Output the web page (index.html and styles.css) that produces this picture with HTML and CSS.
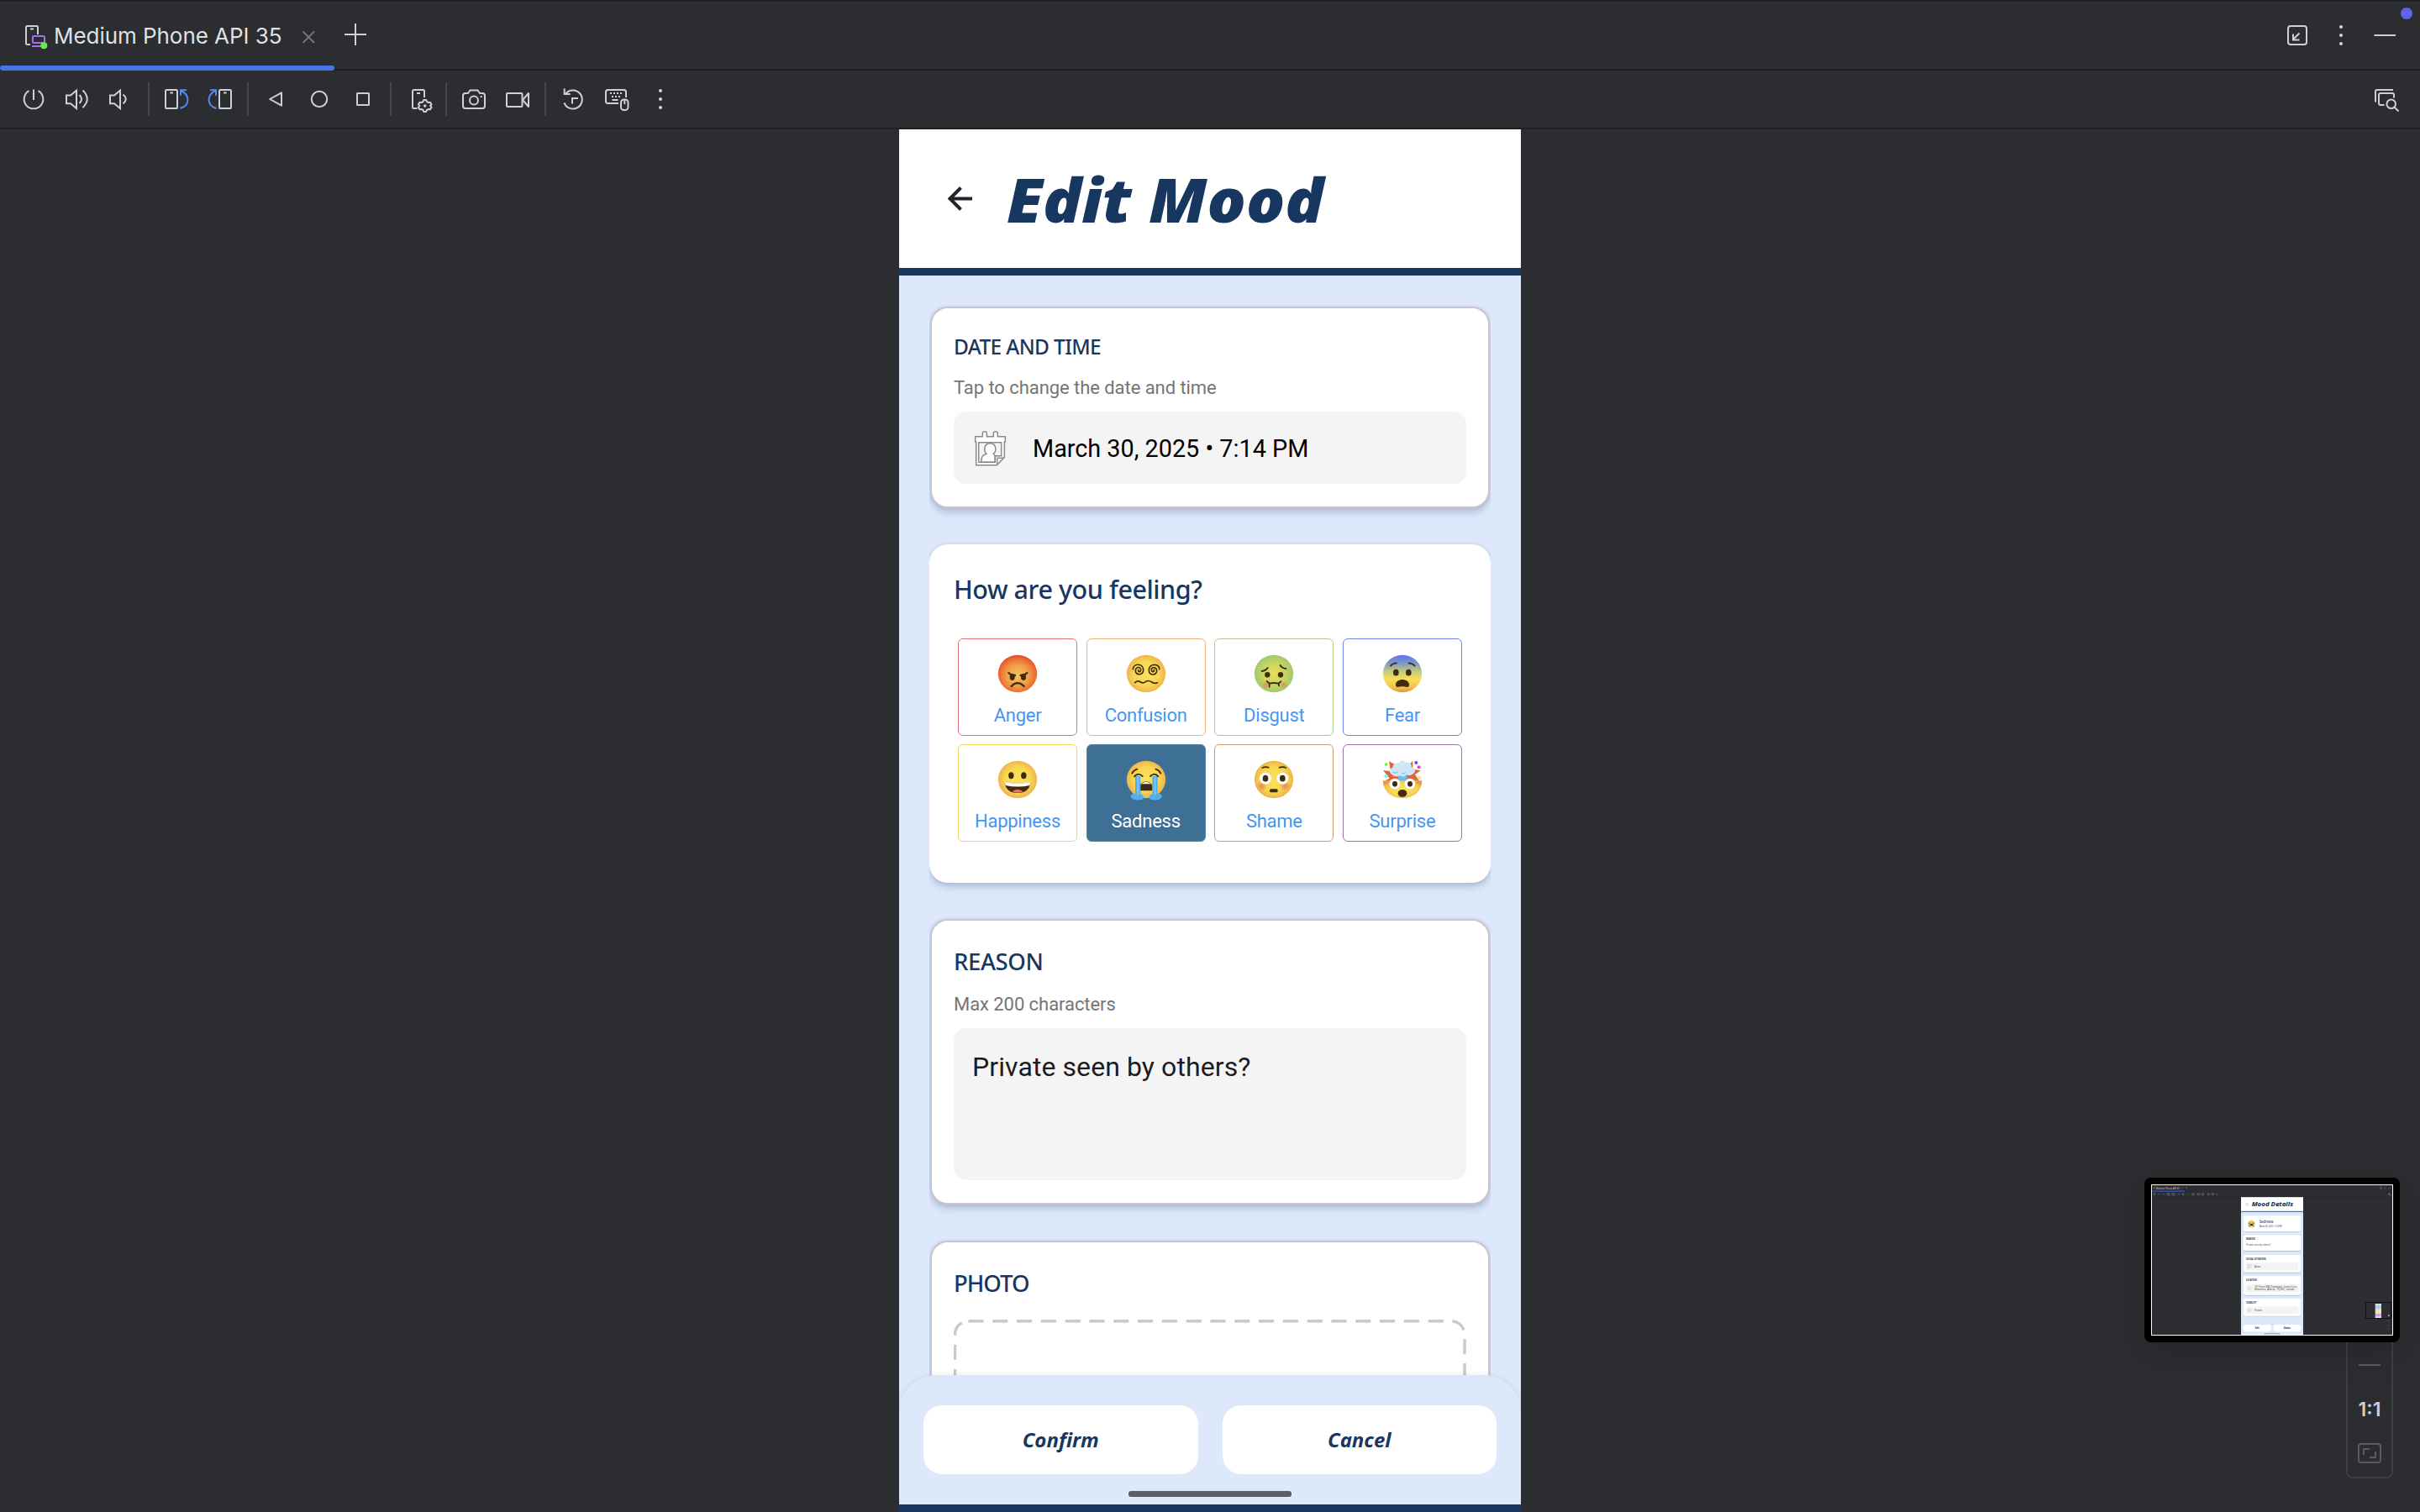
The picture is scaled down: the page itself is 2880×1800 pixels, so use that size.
FILE: index.html
```html
<!DOCTYPE html>
<html lang="en">
<head>
<meta charset="utf-8">
<title>Running Devices</title>
<link rel="stylesheet" href="styles.css">
</head>
<body>
<svg class="defs" width="0" height="0" aria-hidden="true">
  <defs>
    <radialGradient id="yellow" cx=".5" cy=".5" r=".55"><stop offset="0" stop-color="#fbe35a"/><stop offset=".6" stop-color="#f7d654"/><stop offset=".88" stop-color="#efb94a"/><stop offset="1" stop-color="#e59a3c"/></radialGradient>
    <radialGradient id="red" cx=".5" cy=".55" r=".55"><stop offset="0" stop-color="#f4c65a"/><stop offset=".5" stop-color="#f0a04a"/><stop offset=".88" stop-color="#ea6630"/><stop offset="1" stop-color="#d9482a"/></radialGradient>
    <radialGradient id="green" cx=".5" cy=".5" r=".55"><stop offset="0" stop-color="#f0dd58"/><stop offset=".5" stop-color="#c8d562"/><stop offset=".88" stop-color="#a4cb6c"/><stop offset="1" stop-color="#83a85a"/></radialGradient>
    <linearGradient id="blue" x1="0" y1="0" x2="0" y2="1"><stop offset="0" stop-color="#5f72f2"/><stop offset=".22" stop-color="#7f97c4"/><stop offset=".45" stop-color="#c6cf78"/><stop offset=".65" stop-color="#f8df57"/><stop offset=".88" stop-color="#f2bd4b"/><stop offset="1" stop-color="#e0963a"/></linearGradient>
    <radialGradient id="blush"><stop offset="0" stop-color="#e28a5c"/><stop offset="1" stop-color="#e28a5c" stop-opacity="0"/></radialGradient>
  </defs>
</svg>

<header class="tabs">
  <div class="tab">
    <svg class="tab-icon" viewBox="28 28 32 32"><g fill="none" stroke="#ced0d6" stroke-width="2"><path d="M45 41V32.5q0-1.5-1.5-1.5h-11q-1.5 0-1.5 1.5v19q0 1.500 1.500 1.500H36M36 34.500h4"/><path stroke="#a571e6" d="M40.500 43h11q1.500 0 1.500 1.500v5q0 1.500-1.500 1.500h-11q-1.500 0-1.500-1.500v-5q0-1.500 1.500-1.500zM38 55h11"/></g><circle cx="52.300" cy="54.200" r="4" fill="#62f045"/></svg>
    <span class="tab-title">Medium Phone API 35</span>
    <svg class="tab-close" viewBox="360 36 16 16"><path d="M361.500 37.500l13.500 13.500M375 37.500L361.500 51" stroke="#75777c" stroke-width="1.800"/></svg>
  </div>
  <svg class="tab-add" viewBox="408 26 30 30"><path d="M423 28v26M410 41h26" stroke="#ced0d6" stroke-width="2"/></svg>
  <div class="window-actions">
    <svg class="slot" viewBox="2708 22 52 40"><rect x="2723" y="31" width="22" height="22" rx="3"/><path d="M2736.500 39.500l-7.800 7.800M2729 40.500v7h7.500"/></svg>
    <svg class="slot fill" viewBox="2760 22 52 40"><circle cx="2786" cy="32" r="2.100"/><circle cx="2786" cy="42" r="2.100"/><circle cx="2786" cy="52" r="2.100"/></svg>
    <svg class="slot" viewBox="2812 22 52 40"><path d="M2825.500 42h25.500"/></svg>
  </div>
  <span class="notification-dot"></span>
</header>

<nav class="toolbar">
  <svg class="slot" viewBox="14 98 52 40"><path d="M34.500 108.200a11.300 11.300 0 1 0 11 0M40 106.500V119"/></svg>
  <svg class="slot" viewBox="66 98 52 40"><path d="M79 113.500h5l7-5.800v21.400l-7-5.800h-5zM94.500 113q5 5 0 10M98.500 107.500q10.500 10.300 0 20.600"/></svg>
  <svg class="slot" viewBox="118 98 52 40"><path d="M131 113.500h5l7-5.800v21.400l-7-5.800h-5zM146.500 112.500q6.500 5.500 0 11"/></svg>
  <i class="sep"></i>
  <svg class="slot" viewBox="184 98 52 40"><rect x="197" y="107" width="14" height="22" rx="1.500"/><path d="M202.500 110.500h3.500"/><path class="accent" d="M222 107.300h-7v6.500M215.500 108c10.500 5 11 17.500-1 21"/></svg>
  <svg class="slot" viewBox="236 98 52 40"><rect x="261" y="107" width="14" height="22" rx="1.500"/><path d="M266 110.500h3.500"/><path class="accent" d="M250 107.300h7v6.500M256.500 108c-10.500 5-11 17.500 1 21"/></svg>
  <i class="sep"></i>
  <svg class="slot" viewBox="302 98 52 40"><path stroke-linejoin="round" d="M335 110.300v15.400l-13.800-7.700z"/></svg>
  <svg class="slot" viewBox="354 98 52 40"><circle cx="380" cy="118" r="9.200"/></svg>
  <svg class="slot" viewBox="406 98 52 40"><rect x="425" y="111" width="14" height="14" rx=".5"/></svg>
  <i class="sep"></i>
  <svg class="slot" viewBox="472 98 52 40"><path d="M505 116v-7.500q0-1.500-1.500-1.500h-11q-1.500 0-1.500 1.500v19q0 1.500 1.500 1.500h4M496 111h4"/><path stroke-linejoin="round" d="M504.200 119h3l.7 2 2 1.100 2.100-.4 1.500 2.600-1.400 1.600v.2l1.400 1.600-1.500 2.600-2.100-.4-2 1.100-.7 2h-3l-.7-2-2-1.100-2.100.4-1.500-2.600 1.400-1.600v-.2l-1.400-1.600 1.500-2.600 2.100.4 2-1.100z"/><circle cx="505.700" cy="126" r=".8"/></svg>
  <i class="sep"></i>
  <svg class="slot" viewBox="538 98 52 40"><path d="M554 111h3l2.500-3.500h9L571 111h3q3 0 3 3v12q0 3-3 3h-20q-3 0-3-3v-12q0-3 3-3z"/><circle cx="564" cy="119.500" r="5"/><path d="M571.700 115h2"/></svg>
  <svg class="slot" viewBox="590 98 52 40"><rect x="603" y="111" width="18.500" height="16" rx="1"/><path stroke-linejoin="round" d="M622 119l7-8v16z"/></svg>
  <i class="sep"></i>
  <svg class="slot" viewBox="656 98 52 40"><path d="M671.700 105.500v6.500h7M673.500 111.300a11 11 0 1 1-2 11M681 123.500V117h7"/></svg>
  <svg class="slot" viewBox="708 98 52 40"><path d="M745 116v-6.500q0-2.500-2.500-2.500h-19q-2.500 0-2.500 2.500v11q0 2.500 2.500 2.500h12.500M728.500 119h7M726 111h2m2 0h2m2 0h2m2 0h2M728 115h2m2 0h2m2 0h2"/><rect x="739" y="118.500" width="8.500" height="12.500" rx="3.500"/><path d="M743.300 119v5"/></svg>
  <svg class="slot fill" viewBox="760 98 52 40"><circle cx="786" cy="108" r="2.100"/><circle cx="786" cy="118" r="2.100"/><circle cx="786" cy="128" r="2.100"/></svg>
  <svg class="slot last" viewBox="2814 98 52 40"><path d="M2827 121.500V109q0-2 2-2h19M2837.500 125h-4.500q-2 0-2-2v-10q0-2 2-2h14q2 0 2 2v3.500"/><circle cx="2845.700" cy="123.700" r="5.300"/><path d="M2849.500 127.500l5 5"/></svg>
</nav>

<main class="stage">
  <section class="phone">
    <div class="app-bar">
      <svg class="back" viewBox="1127 220 32 32"><path d="M1157 236.500h-26M1143.500 223.500l-13 13 13 13" fill="none" stroke="#25232a" stroke-width="4"/></svg>
      <h1 class="title">Edit Mood</h1>
    </div>

    <div class="cards">
      <article class="card date-card">
        <h2 class="label small">DATE AND TIME</h2>
        <p class="hint">Tap to change the date and time</p>
        <div class="date-field">
          <svg class="calendar" viewBox="87 92 117 129"><g fill="none" stroke="#8a8a8a" stroke-width="4.500"><path fill="#fff" d="M92 134V115h26v-12q0-6 7.500-6t7.500 6v12h24v-12q0-6 7.500-6t7.500 6v12h27v19h-3v55l-27 28H95v-83z"/><path fill="#f4f4f4" d="M104 136h81v48h-22v23h-59z"/><path fill="#fff" d="M113 206c0-18 5-25 19-29-12-12-8-38 13-38s25 26 12 38q5 2 5 9v20z"/><path d="M170 215v-23h24"/></g></svg>
          <span class="date-text">March 30, 2025 • 7:14 PM</span>
        </div>
      </article>

      <article class="card mood-card">
        <h2 class="question">How are you feeling?</h2>
        <div class="moods">
          <div class="mood anger">
            <svg class="emoji" viewBox="-75 -75 150 150"><ellipse rx="69.500" ry="66.500" fill="url(#red)"/><g fill="#422b0d"><ellipse cx="-19" cy="12" rx="9" ry="12"/><ellipse cx="21" cy="12" rx="9" ry="12"/></g><path d="M-32-3Q-22 7-9 6M34-3Q24 7 11 6M-22 45Q0 22 23 45" fill="none" stroke="#422b0d" stroke-width="7" stroke-linecap="round"/></svg>
            <span>Anger</span>
          </div>
          <div class="mood confusion">
            <svg class="emoji" viewBox="-75 -75 150 150"><ellipse rx="69.500" ry="66.500" fill="url(#yellow)"/><path d="M-47-16C-46-38-10-38-10-14-10 8-38 6-38-10-38-26-18-26-19-13-20-4-30-6-28-13M47-16C50-36 10-40 10-12 10 10 40 6 38-12 36-26 16-24 19-12 22-4 30-6 28-14M-40 32q10-9 20-2t20-3q10-4 20 3t20 2" fill="none" stroke="#422b0d" stroke-width="5" stroke-linecap="round"/></svg>
            <span>Confusion</span>
          </div>
          <div class="mood disgust">
            <svg class="emoji" viewBox="-75 -75 150 150"><ellipse rx="69.500" ry="66.500" fill="url(#green)"/><circle cx="-30" cy="42" r="14" fill="url(#blush)"/><circle cx="34" cy="40" r="14" fill="url(#blush)"/><g fill="#422b0d"><ellipse cx="-23" cy="4" rx="9.500" ry="10"/><ellipse cx="24" cy="4" rx="9.500" ry="10"/></g><path d="M-43-9Q-28-11-22-21M23-30Q29-19 43-18M-25 27l9 8Q0 31 17 35l8-7M-16 35v12M17 35l1 8" fill="none" stroke="#422b0d" stroke-width="5.500" stroke-linecap="round"/></svg>
            <span>Disgust</span>
          </div>
          <div class="mood fear">
            <svg class="emoji" viewBox="-75 -75 150 150"><ellipse rx="69.500" ry="66.500" fill="url(#blue)"/><g fill="#422b0d"><ellipse cx="-23" cy="-4" rx="10" ry="11.500"/><ellipse cx="22" cy="-4" rx="10" ry="11.500"/><path d="M-24 40C-24 15 24 15 24 40 24 54 10 45 0 46-10 45-24 54-24 40z"/></g><path d="M-43-28Q-34-38-21-38M44-28Q35-38 22-38" fill="none" stroke="#422b0d" stroke-width="5" stroke-linecap="round"/></svg>
            <span>Fear</span>
          </div>
          <div class="mood happiness">
            <svg class="emoji" viewBox="-75 -75 150 150"><ellipse rx="69.500" ry="66.500" fill="url(#yellow)"/><g fill="#422b0d"><ellipse cx="-23" cy="-14" rx="9.500" ry="12"/><ellipse cx="22" cy="-14" rx="9.500" ry="12"/><path d="M-46 10Q0 20 46 10 42 48 0 48T-46 10z"/></g><path d="M-46 9Q0 19 46 9L43 21Q0 30-43 21z" fill="#fff"/><path d="M-20 43Q0 28 20 43 0 51-20 43z" fill="#e2706c"/></svg>
            <span>Happiness</span>
          </div>
          <div class="mood sadness">
            <svg class="emoji" viewBox="-75 -75 150 150"><ellipse rx="69.500" ry="66.500" fill="url(#yellow)"/><path d="M-22 40V25C-20 2 20 2 22 25V40z" fill="#422b0d"/><path d="M-18 16Q0 0 18 16z" fill="#fff"/><path d="M-39-12V50Q-54 50-56 60-50 73-35 73-12 76-8 64-10 54-20 52V-12zM41-12V50Q55 50 57 60 51 73 37 73 14 76 10 64 12 54 22 52V-12z" fill="#55aeee"/><path d="M-29-10V55M32-10V55" stroke="#7dc7fa" stroke-width="6"/><path d="M-42-11Q-28-27-13-12M15-12Q30-27 43-11M-50-22Q-44-34-32-37M52-22Q46-34 34-37" fill="none" stroke="#422b0d" stroke-width="5.500" stroke-linecap="round"/></svg>
            <span>Sadness</span>
          </div>
          <div class="mood shame">
            <svg class="emoji" viewBox="-75 -75 150 150"><ellipse rx="69.500" ry="66.500" fill="url(#yellow)"/><circle cx="-43" cy="24" r="20" fill="url(#blush)"/><circle cx="40" cy="24" r="20" fill="url(#blush)"/><circle cx="-30" cy="-4" r="21" fill="#fff"/><circle cx="31" cy="-4" r="21" fill="#fff"/><g fill="#422b0d"><ellipse cx="-30" cy="-4" rx="10" ry="11.500"/><ellipse cx="31" cy="-4" rx="10" ry="11.500"/><rect x="-15" y="34" width="29" height="12" rx="5"/></g><path d="M-41-42Q-32-47-19-43M43-42Q34-47 20-43" fill="none" stroke="#422b0d" stroke-width="5" stroke-linecap="round"/></svg>
            <span>Shame</span>
          </div>
          <div class="mood surprise">
            <svg class="emoji" viewBox="-75 -75 150 150"><path d="M-62 4l16-8-23-29 27 4-6-36 28 15 42 0 15-17 0 30 28 5-20 14 14 22z" fill="#e0663a"/><path d="M-69.500 4H69.500C69 42 40 66.500 0 66.500S-69 42-69.500 4z" fill="url(#yellow)"/><path d="M-18 4L-12-26H14L20 4z" fill="#6bb8e8"/><path d="M-38-18c-13-9-8-23 3-23 0-18 18-19 23-19 7-12 23-7 24-1 15-2 22 7 20 16 15 2 17 20 6 24-6 8-19 7-23 3-4 9-16 10-23 4-9 5-21 5-30-4z" fill="#cfe6f5"/><path d="M-34-27q10 8 18-2M-2-24q8 6 14-3M5-13v10" fill="none" stroke="#8cc3e6" stroke-width="4"/><circle cx="-27" cy="15" r="19" fill="#fff"/><circle cx="27" cy="15" r="19" fill="#fff"/><g fill="#422b0d"><ellipse cx="-27" cy="16" rx="9" ry="10"/><ellipse cx="27" cy="16" rx="9" ry="10"/><ellipse cx="0" cy="49" rx="16" ry="13"/></g><circle cx="-58" cy="-54" r="6" fill="#7df24a"/><circle cx="49" cy="-60" r="6" fill="#5a4ff0"/><circle cx="59" cy="-44" r="6" fill="#ea3fd0"/><circle cx="-58" cy="-12" r="7" fill="#7defff"/><circle cx="60" cy="-7" r="6" fill="#fbe37a"/></svg>
            <span>Surprise</span>
          </div>
        </div>
      </article>

      <article class="card reason-card">
        <h2 class="label">REASON</h2>
        <p class="hint">Max 200 characters</p>
        <div class="reason-field">Private seen by others?</div>
      </article>

      <article class="card photo-card">
        <h2 class="label photo">PHOTO</h2>
        <svg class="dropzone" viewBox="0 0 610 240"><g fill="none" stroke="#c9c9c9" stroke-width="3.500" stroke-dasharray="18 10.800"><path d="M17.500 1.800H592a16 16 0 0 1 16 16V240"/><path stroke-dasharray="18 11" stroke-dashoffset="-8" d="M17.500 1.800a16 16 0 0 0-16 16V240"/></g></svg>
      </article>
    </div>

    <footer class="actions">
      <div class="buttons">
        <button class="action">Confirm</button>
        <button class="action">Cancel</button>
      </div>
      <span class="handle"></span>
    </footer>
  </section>
</main>

<aside class="zoom-controls">
  <svg class="zoom-out" viewBox="0 0 26 2"><path d="M0 1h26" stroke="#5a5b5e" stroke-width="2"/></svg>
  <span class="zoom-ratio">1:1</span>
  <svg class="zoom-fit" viewBox="0 0 28 24"><g fill="none" stroke="#5a5b5e" stroke-width="2"><rect x="1" y="1" width="26" height="22" rx="3"/><path d="M7 14V7h7M21 10v7h-7"/></g></svg>
</aside>

<aside class="preview">
  <svg class="preview-shot" viewBox="93 93 858 534">
    <rect x="93" y="93" width="858" height="534" fill="#2b2d30"/>
    <path d="M93 117h858M93 135h858" stroke="#222326" stroke-width="1"/>
    <rect x="93" y="112" width="117" height="5" fill="#2f4da0"/>
    <path d="M99 99h5v7h-5z" fill="none" stroke="#999" />
    <text x="108" y="106.500" class="pv" font-size="9" fill="#d0d2d6" textLength="83" lengthAdjust="spacingAndGlyphs">Medium Phone API 35</text>
    <path d="M198 101l4 4m0-4l-4 4M213 102h7m-3.500-3.500v7M926 98v10M938 103h7M907 99h7v7h-7z" stroke="#999" fill="none"/>
    <g fill="none" stroke="#8b8d91" stroke-width="1.500"><circle cx="102" cy="125" r="3.500"/><path d="M114 125h8M129 125h7M186 125h6M218 125h4M325 121v8"/><path d="M148 121h8v8h-8zM165 121h8v8h-8zM237 121h6v8h-6zM255 122h9v6h-9zM271 122h7v6h-7zM306 121h8v6h-8z"/><circle cx="204" cy="125" r="3"/><circle cx="295" cy="125" r="3.500"/><path d="M937 122h6v5h-6zM943 127l3 3"/></g>
    <rect x="411" y="136" width="222" height="491" fill="#dde8fb"/>
    <rect x="411" y="136" width="222" height="50" fill="#fff"/>
    <rect x="411" y="185.500" width="222" height="3" fill="#355a87"/>
    <path d="M427 156l10 10m0-10l-10 10" stroke="#999" stroke-width="1.500"/>
    <text x="449" y="169" class="pv bold-italic" font-size="22" fill="#183760" textLength="148" lengthAdjust="spacingAndGlyphs">Mood Details</text>
    <g fill="#b4c4d9"><rect x="420" y="205" width="204" height="55" rx="6"/><rect x="420" y="275" width="204" height="55" rx="6"/><rect x="420" y="347" width="204" height="60" rx="6"/><rect x="420" y="425" width="204" height="63" rx="6"/><rect x="420" y="505" width="204" height="57" rx="6"/></g>
    <g fill="#fff"><rect x="420" y="201" width="204" height="57" rx="6"/><rect x="420" y="271" width="204" height="56" rx="6"/><rect x="420" y="342" width="204" height="62" rx="6"/><rect x="420" y="417" width="204" height="68" rx="6"/><rect x="420" y="498" width="204" height="62" rx="6"/><rect x="420" y="591" width="98" height="25" rx="6"/><rect x="527" y="591" width="97" height="25" rx="6"/></g>
    <g fill="#f3f3f3"><rect x="429" y="370" width="187" height="26" rx="4"/><rect x="429" y="446" width="187" height="30" rx="4"/><rect x="429" y="526" width="187" height="26" rx="4"/></g>
    <ellipse cx="448" cy="231" rx="13" ry="13" fill="#f5c84e"/><path d="M443 237v-4q5-5 10 0v4z" fill="#422b0d"/><path d="M441 228v15M455 228v15" stroke="#55aeee" stroke-width="4"/><path d="M438 228h6M452 228h6" stroke="#422b0d" stroke-width="1.500"/>
    <g class="pv" fill="#183760"><text x="476" y="228" font-size="15" textLength="51" lengthAdjust="spacingAndGlyphs">Sadness</text><text x="476" y="244" font-size="8" textLength="81" lengthAdjust="spacingAndGlyphs">March 30, 2025 • 7:14 PM</text><g class="strong" font-size="8"><text x="429" y="289" textLength="32" lengthAdjust="spacingAndGlyphs">REASON</text><text x="429" y="359" textLength="71" lengthAdjust="spacingAndGlyphs">SOCIAL SITUATION</text><text x="429" y="436" textLength="38" lengthAdjust="spacingAndGlyphs">LOCATION</text><text x="429" y="516" textLength="37" lengthAdjust="spacingAndGlyphs">VISIBILITY</text><text x="461" y="607" font-style="italic" textLength="15" lengthAdjust="spacingAndGlyphs">Edit</text><text x="563" y="607" font-style="italic" textLength="24" lengthAdjust="spacingAndGlyphs">Delete</text></g></g>
    <g class="pv" fill="#444" font-size="9"><text x="429" y="308" textLength="88" lengthAdjust="spacingAndGlyphs">Private seen by others?</text><text x="459" y="386" textLength="22" lengthAdjust="spacingAndGlyphs">Alone</text><text x="459" y="459" font-size="8" textLength="152" lengthAdjust="spacingAndGlyphs">101 Street NW, Downtown, Central Core,</text><text x="459" y="469" font-size="8" textLength="142" lengthAdjust="spacingAndGlyphs">Edmonton, Alberta, T5J 0G7, Canada</text><text x="459" y="542" textLength="27" lengthAdjust="spacingAndGlyphs">Private</text></g>
    <g fill="none" stroke="#999" stroke-width="1.200"><path d="M436 377h10v7l-4 5h-6zM435 461l6-6 6 6-6 6z"/><ellipse cx="441" cy="539" rx="6" ry="4"/></g>
    <rect x="493" y="621.500" width="58" height="3" rx="1.500" fill="#8391a5"/>
    <rect x="855" y="510" width="93" height="60" rx="2" fill="#0c0c0e"/><rect x="858" y="513" width="87" height="54" fill="#2b2d30" stroke="#44464a" stroke-width=".6"/>
    <rect x="890" y="516" width="22" height="51" fill="#d9dcec"/><path d="M891 522h20v12h-20z" fill="#a9cfe0"/><path d="M891 538h20v12h-20z" fill="#f6e49a"/><path d="M891 552h20v9h-20z" fill="#c9a8e6"/>
    <path d="M936 556h5v5h-5z" fill="#bbb"/><path d="M932 577h8M932 594h8" stroke="#888"/><circle cx="936" cy="608" r="3.500" fill="none" stroke="#55575a"/>
  </svg>
</aside>
</body>
</html>
```
FILE: styles.css
```css
* { box-sizing: border-box; }

body {
  margin: 0;
  width: 2880px;
  height: 1800px;
  overflow: hidden;
  display: flex;
  flex-direction: column;
  background: #2b2d30;
  font-family: Roboto, sans-serif;
  position: relative;
}

h1, h2, p { margin: 0; }
svg { display: block; flex: none; }
.defs { position: absolute; }

/* Tool window tabs */
.tabs {
  height: 84px;
  flex: none;
  display: flex;
  border-top: 2px solid #1e1f22;
  border-bottom: 2px solid #1e1f22;
}
.tab {
  width: 398px;
  height: 82px;
  padding: 0 23px 0 28px;
  display: flex;
  align-items: center;
  position: relative;
}
.tab::after {
  content: "";
  position: absolute;
  left: 0;
  right: 0;
  bottom: 0;
  height: 6px;
  border-radius: 3px;
  background: #4674e8;
}
.tab-icon { width: 32px; height: 32px; margin-top: 2px; }
.tab-title {
  margin: 0 0 0 4px;
  font: 400 26px/36px Inter, sans-serif;
  letter-spacing: -.05px;
  color: #dfe1e5;
  white-space: nowrap;
}
.tab-close { width: 16px; height: 16px; margin: 2px 0 0 auto; }
.tab-add { width: 30px; height: 30px; margin: 24px 0 0 10px; }
.window-actions { display: flex; margin: 20px 16px 0 auto; }
.notification-dot {
  position: absolute;
  left: 2857px;
  top: 9px;
  width: 14px;
  height: 14px;
  border-radius: 50%;
  background: #6462ea;
}

.slot {
  width: 52px;
  height: 40px;
  fill: none;
  stroke: #ced0d6;
  stroke-width: 2;
}
.slot.fill { fill: #ced0d6; stroke: none; }
.slot .accent { stroke: #548af7; }

/* Device toolbar */
.toolbar {
  height: 70px;
  flex: none;
  display: flex;
  align-items: center;
  padding: 0 14px;
  border-bottom: 2px solid #1e1f22;
}
.sep { width: 2px; height: 40px; margin: 0 6px; background: #43454a; }
.slot.last { margin-left: auto; }

/* Device screen */
.stage { flex: 1; min-height: 0; display: flex; justify-content: center; }
.phone {
  width: 740px;
  height: 1646px;
  display: flex;
  flex-direction: column;
  background: #dde8fb;
  border-bottom: 9px solid #183760;
}
.app-bar {
  height: 174px;
  flex: none;
  display: flex;
  background: #fff;
  border-bottom: 9px solid #183760;
  padding-left: 57px;
}
.back { width: 32px; height: 32px; margin-top: 66px; }
.title {
  margin: 33px 0 0 39px;
  font: italic 900 73px/100px "Noto Sans", sans-serif;
  color: #183760;
  white-space: nowrap;
  transform: scaleX(1.048);
  transform-origin: left;
}

.cards {
  flex: 1;
  min-height: 0;
  width: 668px;
  margin: 0 36px;
  padding-top: 37px;
  overflow: hidden;
  display: flex;
  flex-direction: column;
  gap: 43px;
}
.card {
  flex: none;
  margin: 0 1px;
  background: #fff;
  border: 2px solid #cac4d0;
  border-radius: 21px;
  padding: 31px 26px 0;
  box-shadow: 0 5px 9px rgba(50, 80, 120, .26), 0 0 4px rgba(50, 80, 120, .1);
}
.date-card { height: 240px; }
.mood-card { height: 403px; margin: 0; border: 0; padding: 35px 29px 0; border-radius: 22px; }
.reason-card { height: 340px; padding-top: 32px; }
.photo-card { height: 440px; padding-top: 32px; }

.label {
  font: 500 27.500px/34px "Noto Sans", sans-serif;
  letter-spacing: -.4px;
  color: #183760;
  white-space: nowrap;
}
.label.small { font-size: 24.500px; line-height: 30px; letter-spacing: -.65px; }
.label.photo { letter-spacing: -1px; }
.question {
  font: 500 30.500px/36px "Noto Sans", sans-serif;
  letter-spacing: -.45px;
  color: #183760;
  white-space: nowrap;
}
.hint {
  margin-top: 21px;
  font-size: 22px;
  line-height: 26px;
  letter-spacing: -.06px;
  color: #757575;
}
.date-field {
  margin-top: 15px;
  height: 86px;
  border-radius: 15px;
  background: #f4f4f4;
  display: flex;
  align-items: center;
  padding-left: 24px;
}
.calendar { width: 39px; height: 43px; }
.date-text { margin: 2px 0 0 31px; font-size: 28.800px; line-height: 34px; color: #000; }

.moods {
  margin: 41px 5px 0;
  display: grid;
  grid-template-columns: repeat(4, 142px);
  justify-content: space-between;
  row-gap: 10px;
}
.mood {
  height: 116px;
  border: 1px solid;
  border-radius: 6px;
  padding-top: 16px;
  display: flex;
  flex-direction: column;
  align-items: center;
  gap: 12px;
}
.mood span { font-size: 22px; line-height: 26px; letter-spacing: -.25px; color: #4596f0; }
.emoji { width: 50px; height: 50px; }
.anger { border-color: #e07078; }
.confusion { border-color: #f0b27c; }
.disgust { border-color: #abc98f; }
.fear { border-color: #7083ea; }
.happiness { border-color: #f6d566; }
.sadness { border-color: #5582a5; background: #3e6f95; }
.shame { border-color: #cf9a6e; }
.surprise { border-color: #9a78a6; }
.mood.sadness span { color: #fff; }

.reason-field {
  margin-top: 15px;
  height: 181px;
  border-radius: 15px;
  background: #f4f4f4;
  padding: 27px 22px;
  font-size: 32px;
  line-height: 38px;
  letter-spacing: .08px;
  color: #1d1b20;
}
.dropzone { width: 610px; height: 240px; margin-top: 26px; }

/* Bottom actions, raised over the scrolling cards */
.actions {
  position: relative;
  flex: none;
  height: 154px;
  margin-top: -154px;
  padding: 36px 29px 0;
  border-radius: 44px 44px 0 0;
  background: #dde8fb;
  box-shadow: 0 -1px 5px rgba(70, 100, 150, .12);
  clip-path: inset(-12px 0 0 0);
  display: flex;
  flex-direction: column;
  align-items: center;
}
.buttons { width: 100%; display: flex; gap: 29px; }
.action {
  flex: 1;
  height: 82px;
  padding: 0;
  border: 0;
  border-radius: 22px;
  background: #fff;
  color: #183760;
  font: italic 700 24px/30px "Noto Sans", sans-serif;
}
.handle { width: 194px; height: 7px; margin-top: 20px; border-radius: 3px; background: #5a5f69; }

/* Floating zoom controls */
.zoom-controls {
  position: absolute;
  left: 2792px;
  top: 1560px;
  width: 56px;
  height: 200px;
  border: 2px solid #3d3f41;
  border-radius: 8px;
  display: flex;
  flex-direction: column;
  align-items: center;
  padding-top: 62px;
}
.zoom-out { width: 26px; height: 2px; }
.zoom-ratio { margin-top: 38px; font: 600 23px/28px Inter, sans-serif; color: #ced0d6; }
.zoom-fit { width: 28px; height: 24px; margin-top: 26px; }

/* Floating screen capture preview */
.preview {
  position: absolute;
  left: 2552px;
  top: 1402px;
  width: 304px;
  height: 196px;
  padding: 8px;
  border-radius: 8px;
  background: #000;
  box-shadow: 0 12px 44px rgba(0, 0, 0, .16);
}
.preview-shot { width: 288px; height: 180px; border: 1px solid #fff; }
.pv { font-family: "Noto Sans", sans-serif; }
.bold-italic { font-weight: 800; font-style: italic; }
.strong { font-weight: 700; }
```
